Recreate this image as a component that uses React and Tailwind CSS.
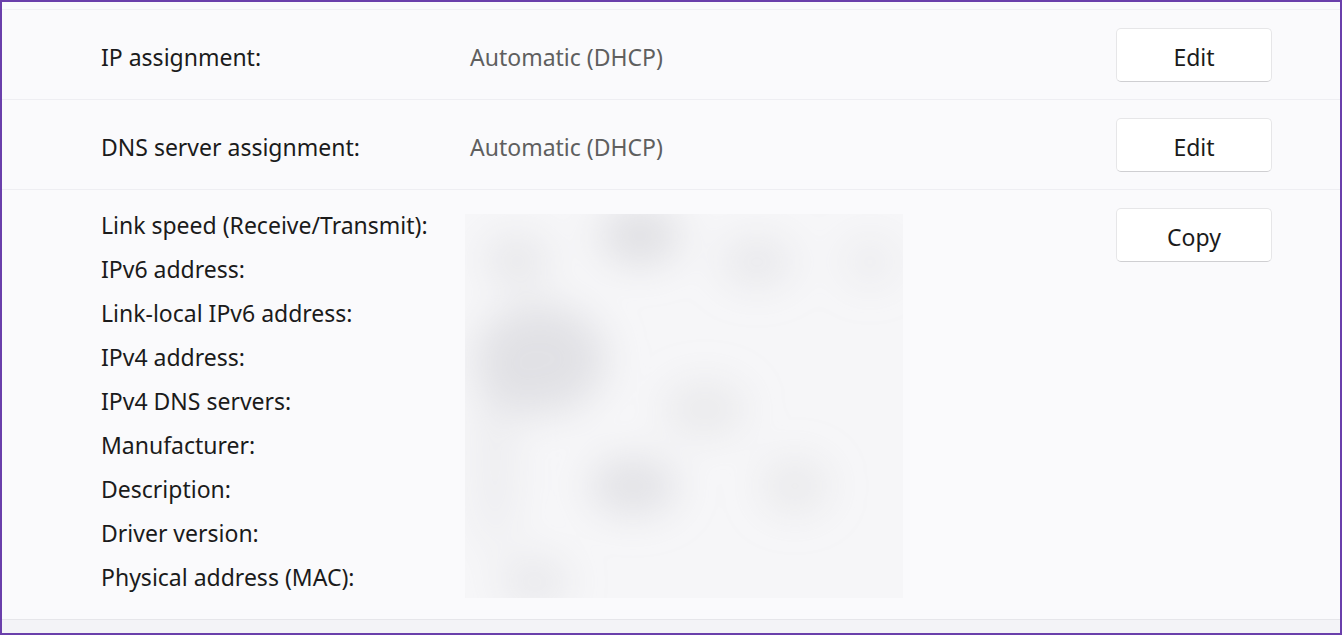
const labels = [
  'Link speed (Receive/Transmit):',
  'IPv6 address:',
  'Link-local IPv6 address:',
  'IPv4 address:',
  'IPv4 DNS servers:',
  'Manufacturer:',
  'Description:',
  'Driver version:',
  'Physical address (MAC):',
];

// blurred blobs over the hidden values, coords local to the 438x384 box
const blobs = [
  { cx: 175, cy: 22, rx: 40, ry: 28, o: 0.5 },
  { cx: 52, cy: 46, rx: 32, ry: 24, o: 0.35 },
  { cx: 292, cy: 48, rx: 36, ry: 24, o: 0.3 },
  { cx: 405, cy: 48, rx: 28, ry: 24, o: 0.2 },
  { cx: 75, cy: 145, rx: 66, ry: 55, o: 0.45 },
  { cx: 240, cy: 195, rx: 42, ry: 28, o: 0.28 },
  { cx: 168, cy: 272, rx: 44, ry: 28, o: 0.45 },
  { cx: 330, cy: 272, rx: 34, ry: 28, o: 0.28 },
  { cx: 70, cy: 368, rx: 34, ry: 24, o: 0.3 },
  { cx: 30, cy: 250, rx: 22, ry: 90, o: 0.18 },
];

function BlurredValues() {
  return (
    <svg width="438" height="384" viewBox="0 0 438 384" className="block">
      <defs>
        <filter id="blr" x="-50%" y="-50%" width="200%" height="200%">
          <feGaussianBlur stdDeviation="20" />
        </filter>
        <clipPath id="clp">
          <rect width="438" height="384" />
        </clipPath>
      </defs>
      <rect width="438" height="384" fill="#f6f6f8" />
      <g clipPath="url(#clp)">
        <g filter="url(#blr)">
          {blobs.map((b, i) => (
            <ellipse key={i} cx={b.cx} cy={b.cy} rx={b.rx} ry={b.ry} fill="#c8c8ce" fillOpacity={b.o} />
          ))}
        </g>
      </g>
    </svg>
  );
}

function Btn({ children }) {
  return (
    <button className="w-[156px] h-[54px] pt-[5px] rounded-[5px] bg-white border border-[#e6e6e8] border-b-[#cfcfd2] text-[23px] text-[#1b1b1b]">
      {children}
    </button>
  );
}

function Row({ label, value }) {
  return (
    <div className="h-[90px] flex items-center border-b border-[#eeeef2] pl-[99px] pr-[68px]">
      <div className="w-[369px] mt-[5px] text-[#1b1b1b]">{label}</div>
      <div className="flex-1 mt-[5px] text-[#5f5f5f]">{value}</div>
      <Btn>Edit</Btn>
    </div>
  );
}

export default function App() {
  return (
    <div
      className="h-[635px] flex flex-col border-2 border-[#6a3fab] bg-[#f3f3f7] text-[23px] leading-none overflow-hidden"
      style={{ fontFamily: '"Noto Sans", sans-serif' }}
    >
      <div className="bg-[#fafafc]">
        <div className="h-[8px] border-b border-[#f0f0f4]" />
        <Row label="IP assignment:" value="Automatic (DHCP)" />
        <Row label="DNS server assignment:" value="Automatic (DHCP)" />
        <div className="h-[430px] flex items-start border-b border-[#e6e6ea] pl-[99px] pr-[68px] pt-[18px]">
          <div className="w-[364px] flex flex-col gap-[20px] pt-[5px] text-[#1b1b1b]">
            {labels.map(l => (
              <div key={l} className="h-[24px] flex items-center">{l}</div>
            ))}
          </div>
          <div className="flex-1 pt-[6px]">
            <BlurredValues />
          </div>
          <Btn>Copy</Btn>
        </div>
      </div>
    </div>
  );
}
